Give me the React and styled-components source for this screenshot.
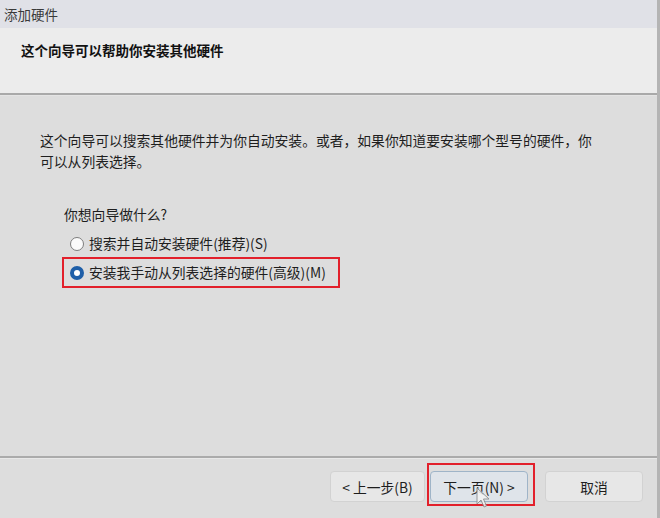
import React from 'react'
import styled, { createGlobalStyle } from 'styled-components'

const GlobalStyle = createGlobalStyle`
	html, body {
		margin: 0;
		padding: 0;
		background: #dddddd;
	}
	body {
		font-family: "Noto Sans CJK SC", "Microsoft YaHei", sans-serif;
		color: #1e1e1e;
	}
`

const Window = styled.div`
	position: relative;
	width: 660px;
	height: 518px;
	display: flex;
	flex-direction: column;
	background: #dddddd;
	border-right: 3px solid #b4b4b4;
	box-sizing: border-box;
	overflow: hidden;
`

const TitleBar = styled.div`
	height: 28px;
	display: flex;
	align-items: center;
	padding-left: 4px;
	background: #e0e1e7;
	font-size: 13.5px;
	color: #3a3a3a;
`

const Header = styled.div`
	height: 67px;
	padding: 12px 0 0 21px;
	box-sizing: border-box;
	background: #ececec;
	border-bottom: 2px solid #a9a9a9;
	font-size: 13.5px;
	font-weight: 700;
	color: #111;
`

const Body = styled.div`
	flex: 1;
	padding: 35px 0 0 40px;
	font-size: 13.8px;
	line-height: 21px;
	box-shadow: inset 0 1px 0 #e4e4e4;
`

const Paragraph = styled.p`
	margin: 0;
	width: 558px;
`

const Question = styled.div`
	margin: 32px 0 0 24px;
`

const Options = styled.div`
	display: flex;
	flex-direction: column;
	margin: 4px 0 0 22px;
`

const Option = styled.label`
	display: flex;
	align-items: center;
	gap: 5px;
	width: 278px;
	height: ${p => (p.$marked ? 31 : 29)}px;
	margin: ${p => (p.$marked ? '-1px 0' : '0')};
	padding-left: 6px;
	box-sizing: border-box;
	border: 2px solid ${p => (p.$marked ? '#e2202b' : 'transparent')};
`

const Radio = styled.span`
	width: 14px;
	height: 14px;
	border-radius: 50%;
	box-sizing: border-box;
	flex: none;
	background: ${p => (p.$checked ? '#ffffff' : '#fbfbfb')};
	border: ${p => (p.$checked ? '4px solid #1f5fa8' : '1px solid #7d7d7d')};
`

const Footer = styled.div`
	height: 62px;
	border-top: 2px solid #ababab;
	box-shadow: inset 0 1px 0 #e8e8e8;
	display: flex;
	align-items: flex-start;
	padding: 13px 0 0 330px;
	box-sizing: border-box;
`

const Button = styled.div`
	width: ${p => p.$w || 96}px;
	height: 31px;
	box-sizing: border-box;
	display: flex;
	align-items: center;
	justify-content: center;
	border-radius: 4px;
	font-size: 13.8px;
	color: #1e1e1e;
	background: ${p => (p.$primary ? '#dfe4ea' : '#e7e7e7')};
	border: 1px solid ${p => (p.$primary ? '#9fb4c8' : '#d2d2d2')};
	flex: none;
`

const Highlight = styled.div`
	border: 2px solid #e2202b;
	padding: 6px 5px 2px 1px;
	margin: -8px 10px 0 2px;
	display: flex;
`

const Cursor = styled.svg`
	position: absolute;
	left: 476px;
	top: 487px;
`

export default function App() {
	return (
		<>
			<GlobalStyle />
			<Window>
				<TitleBar>添加硬件</TitleBar>
				<Header>这个向导可以帮助你安装其他硬件</Header>
				<Body>
					<Paragraph>
						这个向导可以搜索其他硬件并为你自动安装。或者，如果你知道要安装哪个型号的硬件，你可以从列表选择。
					</Paragraph>
					<Question>你想向导做什么?</Question>
					<Options>
						<Option>
							<Radio />
							搜索并自动安装硬件(推荐)(S)
						</Option>
						<Option $marked>
							<Radio $checked />
							安装我手动从列表选择的硬件(高级)(M)
						</Option>
					</Options>
				</Body>
				<Footer>
					<Button $w={95}>&lt; 上一步(B)</Button>
					<Highlight>
						<Button $primary $w={98}>下一页(N) &gt;</Button>
					</Highlight>
					<Button $w={98}>取消</Button>
				</Footer>
				<Cursor width="14" height="22" viewBox="0 0 14 22">
					<path
						d="M1 1 L1 17 L5 13 L8 20 L10.5 19 L7.5 12 L13 12 Z"
						fill="#f4f4f4"
						stroke="#8a8a8a"
						strokeWidth="1"
						strokeLinejoin="round"
						opacity="0.85"
					/>
				</Cursor>
			</Window>
		</>
	)
}
